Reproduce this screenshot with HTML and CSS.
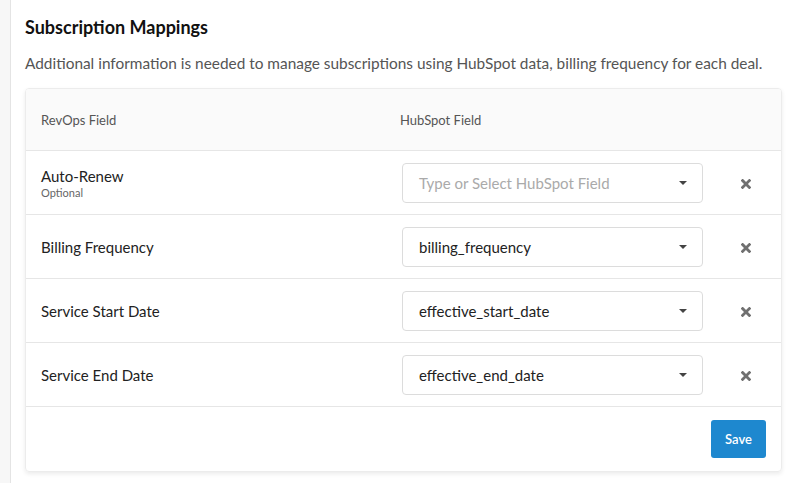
FILE: index.html
```html
<!DOCTYPE html>
<html>
<head>
<meta charset="utf-8">
<link rel="stylesheet" href="styles.css">
</head>
<body>
<div class="page">
  <div class="panel">
    <h2 class="title">Subscription Mappings</h2>
    <p class="desc">Additional information is needed to manage subscriptions using HubSpot data, billing frequency for each deal.</p>
    <div class="card">
      <div class="row head">
        <div class="hcell">RevOps Field</div>
        <div class="hcell hub">HubSpot Field</div>
        <div></div>
      </div>
      <div class="row">
        <div class="label">Auto-Renew<span class="sub">Optional</span></div>
        <div class="select placeholder"><span>Type or Select HubSpot Field</span><i class="caret"></i></div>
        <div class="del"><svg viewBox="0 0 10 10" width="10" height="10"><path d="M1.6 1.6L8.4 8.4M8.4 1.6L1.6 8.4" stroke="#707070" stroke-width="2.8" stroke-linecap="square"/></svg></div>
      </div>
      <div class="row">
        <div class="label">Billing Frequency</div>
        <div class="select"><span>billing_frequency</span><i class="caret"></i></div>
        <div class="del"><svg viewBox="0 0 10 10" width="10" height="10"><path d="M1.6 1.6L8.4 8.4M8.4 1.6L1.6 8.4" stroke="#707070" stroke-width="2.8" stroke-linecap="square"/></svg></div>
      </div>
      <div class="row">
        <div class="label">Service Start Date</div>
        <div class="select"><span>effective_start_date</span><i class="caret"></i></div>
        <div class="del"><svg viewBox="0 0 10 10" width="10" height="10"><path d="M1.6 1.6L8.4 8.4M8.4 1.6L1.6 8.4" stroke="#707070" stroke-width="2.8" stroke-linecap="square"/></svg></div>
      </div>
      <div class="row">
        <div class="label">Service End Date</div>
        <div class="select"><span>effective_end_date</span><i class="caret"></i></div>
        <div class="del"><svg viewBox="0 0 10 10" width="10" height="10"><path d="M1.6 1.6L8.4 8.4M8.4 1.6L1.6 8.4" stroke="#707070" stroke-width="2.8" stroke-linecap="square"/></svg></div>
      </div>
      <div class="foot">
        <button class="save">Save</button>
      </div>
    </div>
  </div>
</div>
</body>
</html>
```

FILE: styles.css
```css
html, body {
  margin: 0;
  padding: 0;
  background: #f7f7f7;
  font-family: Lato, "Open Sans", sans-serif;
  color: #222;
}
.page {
  height: 483px;
  overflow: hidden;
  padding-left: 10px;
}
.panel {
  width: 771px;
  min-height: 483px;
  background: #fff;
  border-left: 1px solid #e4e4e4;
  border-right: 1px solid #e4e4e4;
  padding: 14px 14px 0 14px;
  box-sizing: content-box;
}
.title {
  margin: 0;
  font-size: 18px;
  font-weight: 700;
  line-height: 26px;
  color: #111;
}
.desc {
  margin: 12px 0 0 0;
  font-size: 15.4px;
  line-height: 22px;
  color: #555;
}
.card {
  margin-top: 14px;
  width: 757px;
  border: 1px solid #ececec;
  border-radius: 4px;
  box-shadow: 0 2px 4px rgba(0,0,0,0.08);
  box-sizing: border-box;
  overflow: hidden;
}
.row {
  display: grid;
  grid-template-columns: 361px 301px 1fr;
  align-items: center;
  height: 64px;
  padding-left: 15px;
  border-bottom: 1px solid #e6e6e6;
  box-sizing: border-box;
}
.row.head {
  height: 62px;
  background: #fafafa;
}
.hcell {
  font-size: 13px;
  color: #555;
}
.hub {
  margin-left: -2px;
}
.label {
  font-size: 15px;
  color: #222;
  display: flex;
  flex-direction: column;
}
.sub {
  font-size: 11px;
  color: #666;
  margin-top: 1px;
}
.select {
  height: 40px;
  border: 1px solid #dcdcdc;
  border-radius: 4px;
  box-sizing: border-box;
  display: flex;
  align-items: center;
  justify-content: space-between;
  padding: 0 15px 0 16px;
  font-size: 15px;
  color: #222;
}
.select.placeholder {
  color: #aaa;
}
.caret {
  width: 0;
  height: 0;
  border-left: 4px solid transparent;
  border-right: 4px solid transparent;
  border-top: 4px solid #444;
}
.del {
  display: flex;
  justify-content: center;
  padding-left: 8px;
  padding-top: 3px;
}
.del svg {
  display: block;
}
.foot {
  height: 64px;
  display: flex;
  justify-content: flex-end;
  align-items: center;
  padding-right: 15px;
}
.save {
  width: 55px;
  height: 38px;
  border: none;
  border-radius: 3px;
  background: #1e88cf;
  color: #fff;
  font-family: Lato, "Open Sans", sans-serif;
  font-size: 13px;
  font-weight: 600;
  cursor: pointer;
}
```
